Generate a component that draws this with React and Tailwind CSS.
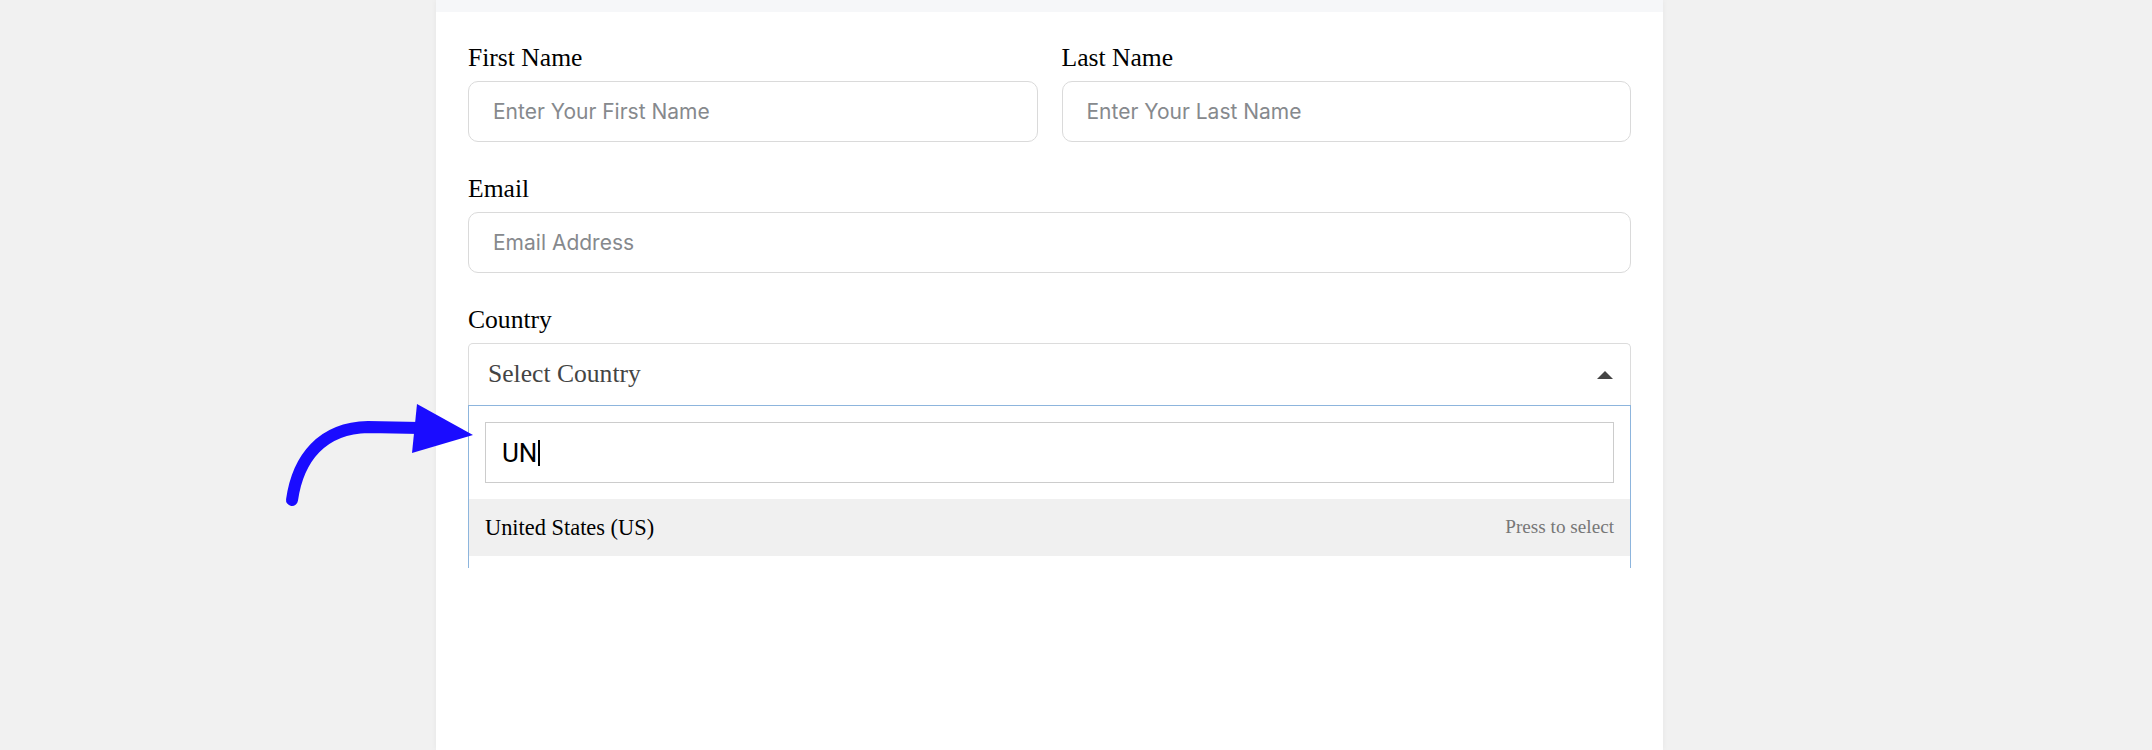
import { useState } from 'react';

const serif = "font-['Liberation_Serif',serif]";

function Field({ label, placeholder }) {
  return (
    <div>
      <label className={`block ${serif} text-[25.6px] leading-[30px] text-black mb-2`}>{label}</label>
      <input
        type="text"
        placeholder={placeholder}
        className="block w-full h-[61px] px-6 rounded-[10px] border border-[#dadada] bg-white font-['Inter',sans-serif] text-[21px] text-gray-800 placeholder:text-[#86898d] outline-none"
      />
    </div>
  );
}

function CountrySelect() {
  const [query] = useState('UN');

  return (
    <div>
      <label className={`block ${serif} text-[25.6px] leading-[30px] text-black mb-2`}>Country</label>
      <div className="flex items-center justify-between h-[62px] pl-[19px] pr-[17px] border-x border-t border-[#dcdcdc] rounded-t-[5px] bg-white">
        <span className={`${serif} text-[25.6px] text-[#444]`}>Select Country</span>
        <svg width="16" height="8" viewBox="0 0 16 8">
          <polygon points="0,8 8,0 16,8" fill="#444" />
        </svg>
      </div>
      <div className="h-[163px] overflow-hidden border-x border-t border-[#8db5dd] bg-white">
        <div className="p-4">
          <div className="flex items-center h-[61px] pl-4 border border-[#cccccc] bg-white">
            <span className="font-['Roboto',sans-serif] text-[26px] text-black leading-none">{query}</span>
            <span className="ml-[1px] w-[2px] h-[26px] bg-black" />
          </div>
        </div>
        <div className="flex items-center justify-between h-[57px] px-4 bg-[#f0f0f0]">
          <span className={`${serif} text-[22.4px] text-black`}>United States (US)</span>
          <span className={`${serif} text-[19.2px] text-[#777]`}>Press to select</span>
        </div>
      </div>
    </div>
  );
}

export default function App() {
  return (
    <div className="relative min-h-[750px] bg-[#f1f1f1] overflow-hidden">
      <div className="ml-[436px] w-[1227px] min-h-[750px] bg-white shadow-[0_0_6px_rgba(0,0,0,0.05)]">
        <div className="h-3 bg-[#f6f7f9]" />
        <div className="px-8 pt-[31px] flex flex-col gap-8">
          <div className="grid grid-cols-2 gap-6">
            <Field label="First Name" placeholder="Enter Your First Name" />
            <Field label="Last Name" placeholder="Enter Your Last Name" />
          </div>
          <Field label="Email" placeholder="Email Address" />
          <CountrySelect />
        </div>
      </div>

      {/* pointer arrow */}
      <svg
        className="absolute left-[280px] top-[395px]"
        width="200"
        height="120"
        viewBox="280 395 200 120"
      >
        <path
          d="M292,500 C298,458 322,428 368,427 L420,428"
          fill="none"
          stroke="#1a0cff"
          strokeWidth="12"
          strokeLinecap="round"
        />
        <polygon points="417,404 473,435 412,453" fill="#1a0cff" />
      </svg>
    </div>
  );
}
